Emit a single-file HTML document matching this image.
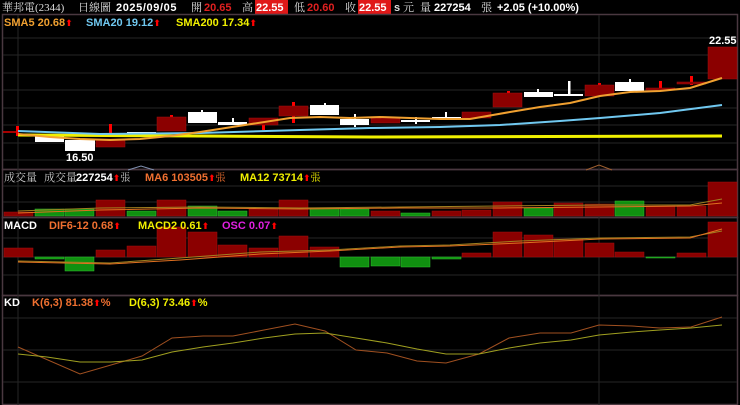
<!DOCTYPE html><html><head><meta charset="utf-8"><style>
html,body{margin:0;padding:0;background:#000;width:740px;height:405px;overflow:hidden}
svg{display:block}
text{font-family:"Liberation Sans","Noto Sans CJK TC",sans-serif;font-weight:bold;font-size:11px}
.c{font-family:"Liberation Serif","Noto Serif CJK SC",serif;font-weight:normal}
.a{fill:#f00;font-size:9px;font-family:"DejaVu Sans",sans-serif}
</style></head><body>
<svg width="740" height="405" viewBox="0 0 740 405" xmlns="http://www.w3.org/2000/svg">
<rect width="740" height="405" fill="#000"/>
<!-- header -->
<text x="2" y="11" fill="#ddd" class="c" font-size="11">華邦電(2344)</text>
<text x="78" y="11" fill="#ddd" class="c">日線圖</text>
<text x="116" y="11" fill="#fff" font-size="13" letter-spacing="0.6">2025/09/05</text>
<text x="191" y="11" fill="#ddd" class="c">開</text>
<text x="204" y="11" fill="#e02020" font-size="12">20.65</text>
<text x="242" y="11" fill="#ddd" class="c">高</text>
<rect x="255" y="0" width="33" height="14" fill="#e01818"/>
<text x="256" y="11" fill="#fff" font-size="12">22.55</text>
<text x="294" y="11" fill="#ddd" class="c">低</text>
<text x="307" y="11" fill="#e02020" font-size="12">20.60</text>
<text x="345" y="11" fill="#ddd" class="c">收</text>
<rect x="358" y="0" width="33" height="14" fill="#e01818"/>
<text x="359" y="11" fill="#fff" font-size="12">22.55</text>
<text x="394" y="11" fill="#ddd" font-size="10">s</text>
<text x="403" y="11" fill="#ddd" class="c">元</text>
<text x="420" y="11" fill="#ddd" class="c">量</text>
<text x="434" y="11" fill="#fff" font-size="12">227254</text>
<text x="481" y="11" fill="#ddd" class="c">張</text>
<text x="497" y="11" fill="#fff" font-size="12">+2.05 (+10.00%)</text>
<!-- panel borders -->
<g fill="none" stroke="#4a3840" stroke-width="1.5">
<rect x="2.5" y="14.5" width="735" height="155"/>
<rect x="2.5" y="169.5" width="735" height="48"/>
<rect x="2.5" y="217.5" width="735" height="78"/>
<rect x="2.5" y="295.5" width="735" height="109"/>
</g>
<g stroke="#262626" stroke-width="1">
<line x1="3" x2="737" y1="38" y2="38"/><line x1="3" x2="737" y1="55" y2="55"/><line x1="3" x2="737" y1="73" y2="73"/><line x1="3" x2="737" y1="90" y2="90"/><line x1="3" x2="737" y1="108" y2="108"/><line x1="3" x2="737" y1="125" y2="125"/><line x1="3" x2="737" y1="143" y2="143"/><line x1="3" x2="737" y1="160" y2="160"/>
<line x1="3" x2="737" y1="186" y2="186"/><line x1="3" x2="737" y1="202" y2="202"/>
<line x1="3" x2="737" y1="238" y2="238"/><line x1="3" x2="737" y1="257" y2="257"/><line x1="3" x2="737" y1="275" y2="275"/>
<line x1="3" x2="737" y1="318" y2="318"/><line x1="3" x2="737" y1="350" y2="350"/><line x1="3" x2="737" y1="382" y2="382"/>
<line x1="18" x2="18" y1="15" y2="405"/><line x1="599" x2="599" y1="15" y2="405"/>
</g>
<!-- legends -->
<text x="4" y="26" fill="#f0a030">SMA5 20.68<tspan class="a">⬆</tspan></text>
<text x="86" y="26" fill="#70c8f0">SMA20 19.12<tspan class="a">⬆</tspan></text>
<text x="176" y="26" fill="#f0f000">SMA200 17.34<tspan class="a">⬆</tspan></text>
<!-- candles -->
<g fill="#f00"><rect x="16" y="126" width="3" height="10"/><rect x="109" y="124" width="3" height="10"/><rect x="170" y="115" width="3" height="4"/><rect x="262" y="125" width="3" height="5"/><rect x="292" y="102" width="3" height="21"/><rect x="507" y="91" width="3" height="4"/><rect x="598" y="83" width="3" height="3"/><rect x="659" y="81" width="3" height="9"/><rect x="690" y="76" width="3" height="9"/></g>
<line x1="3" y1="132" x2="18" y2="132" stroke="#d00" stroke-width="1.5"/>
<g fill="#fff"><rect x="232" y="118" width="2" height="7"/><rect x="201" y="110" width="2" height="4"/><rect x="324" y="103" width="2" height="3"/><rect x="354" y="114" width="2" height="13"/><rect x="415" y="117" width="2" height="7"/><rect x="445" y="112" width="2" height="6"/><rect x="537" y="89" width="2" height="4"/><rect x="568" y="81" width="2.5" height="14"/><rect x="629" y="79" width="2" height="4"/></g>
<g fill="#fff">
<rect x="35" y="136" width="29" height="6"/><rect x="65" y="140" width="30" height="11"/><rect x="127" y="132" width="29" height="2"/><rect x="188" y="112" width="29" height="11"/><rect x="218" y="122" width="29" height="3"/><rect x="310" y="105" width="29" height="10"/><rect x="340" y="119" width="29" height="6"/><rect x="401" y="120" width="29" height="2"/><rect x="432" y="117" width="29" height="2"/><rect x="524" y="92" width="29" height="5"/><rect x="554" y="94" width="29" height="2"/><rect x="615" y="82" width="29" height="9"/></g>
<g fill="#8b0000" stroke="#a01010" stroke-width="0.5">
<rect x="96" y="139" width="29" height="8"/><rect x="157" y="117" width="29" height="14"/><rect x="249" y="118" width="29" height="7"/><rect x="279" y="106" width="29" height="10"/><rect x="371" y="118" width="29" height="5"/><rect x="462" y="112" width="29" height="6"/><rect x="493" y="93" width="29" height="14"/><rect x="585" y="85" width="29" height="11"/><rect x="646" y="88" width="29" height="2"/><rect x="677" y="82" width="29" height="2"/><rect x="708" y="47" width="29" height="32"/></g>
<text x="66" y="161" fill="#fff">16.50</text>
<text x="709" y="44" fill="#fff">22.55</text>
<polyline fill="none" stroke="#f0f000" stroke-width="3" points="18,135 200,136 370,137 722,136"/>
<polyline fill="none" stroke="#70c8f0" stroke-width="2" points="18,131 100,134 200,133 300,130 370,128 440,127 500,125 560,121 600,118 660,113 722,105"/>
<polyline fill="none" stroke="#f0a030" stroke-width="2" points="18,134 50,137 80,139 110,140 140,139 170,136 200,132 290,118 320,117 350,118 380,117 410,118 440,119 470,119 510,112 540,107 570,103 600,96 630,92 660,91 690,88 722,78"/>
<polyline fill="none" stroke="#8090b0" stroke-width="1" points="128,170 141,166 154,170"/>
<polyline fill="none" stroke="#a06030" stroke-width="1" points="586,170 599,165 612,170"/>
<!-- volume -->
<text x="4" y="181" fill="#ccc" class="c" font-size="10">成交量</text>
<text x="44" y="181" fill="#ccc" class="c" font-size="10">成交量</text>
<text x="76" y="181" fill="#fff">227254<tspan class="a">⬆</tspan><tspan fill="#ccc" class="c" font-size="10">張</tspan></text>
<text x="145" y="181" fill="#f07030">MA6 103505<tspan class="a">⬆</tspan><tspan fill="#f07030" class="c" font-size="10">張</tspan></text>
<text x="240" y="181" fill="#f0f000">MA12 73714<tspan class="a">⬆</tspan><tspan fill="#f0f000" class="c" font-size="10">張</tspan></text>
<g fill="#8b0000" stroke="#a01010" stroke-width="0.5">
<rect x="4" y="212" width="29" height="4"/><rect x="96" y="200" width="29" height="16"/><rect x="157" y="200" width="29" height="16"/><rect x="249" y="209" width="29" height="7"/><rect x="279" y="200" width="29" height="16"/><rect x="371" y="211" width="29" height="5"/><rect x="432" y="211" width="29" height="5"/><rect x="462" y="210" width="29" height="6"/><rect x="493" y="202" width="29" height="14"/><rect x="554" y="203" width="29" height="13"/><rect x="585" y="204" width="29" height="12"/><rect x="646" y="206" width="29" height="10"/><rect x="677" y="206" width="29" height="10"/><rect x="708" y="182" width="29" height="34"/></g>
<g fill="#109010" stroke="#30c030" stroke-width="0.5">
<rect x="35" y="209" width="29" height="7"/><rect x="65" y="209" width="29" height="7"/><rect x="127" y="211" width="29" height="5"/><rect x="188" y="206" width="29" height="10"/><rect x="218" y="211" width="29" height="5"/><rect x="310" y="208" width="29" height="8"/><rect x="340" y="209" width="29" height="7"/><rect x="401" y="213" width="29" height="3"/><rect x="524" y="208" width="29" height="8"/><rect x="615" y="201" width="29" height="15"/></g>
<polyline fill="none" stroke="#a08020" stroke-width="1" points="18,211 100,208 200,207 300,208 400,207 500,206 600,205 690,205 722,199"/>
<polyline fill="none" stroke="#e07020" stroke-width="1" points="18,213 100,210 200,208 300,209 400,208 500,208 600,207 690,206 722,203"/>
<!-- macd -->
<g fill="#8b0000" stroke="#a01010" stroke-width="0.5">
<rect x="4" y="248" width="29" height="9"/><rect x="96" y="250" width="29" height="7"/><rect x="127" y="246" width="29" height="11"/><rect x="157" y="227" width="29" height="30"/><rect x="188" y="232" width="29" height="25"/><rect x="218" y="245" width="29" height="12"/><rect x="249" y="248" width="29" height="9"/><rect x="279" y="236" width="29" height="21"/><rect x="310" y="247" width="29" height="10"/><rect x="462" y="253" width="29" height="4"/><rect x="493" y="232" width="29" height="25"/><rect x="524" y="235" width="29" height="22"/><rect x="554" y="239" width="29" height="18"/><rect x="585" y="243" width="29" height="14"/><rect x="615" y="252" width="29" height="5"/><rect x="677" y="253" width="29" height="4"/><rect x="708" y="222" width="29" height="35"/></g>
<g fill="#109010" stroke="#30c030" stroke-width="0.5">
<rect x="35" y="257" width="29" height="2"/><rect x="65" y="257" width="29" height="14"/><rect x="340" y="257" width="29" height="10"/><rect x="371" y="257" width="29" height="9"/><rect x="401" y="257" width="29" height="10"/><rect x="432" y="257" width="29" height="2"/><rect x="646" y="257" width="29" height="1"/></g>
<polyline fill="none" stroke="#a08020" stroke-width="1" points="18,261 110,263 180,258 260,252 330,250 400,246 450,245 520,241 600,238 690,237 722,231"/>
<polyline fill="none" stroke="#e07020" stroke-width="1" points="18,262 110,264 180,260 260,254 330,251 400,247 450,246 520,243 600,239 690,238 722,229"/>
<text x="4" y="229" fill="#fff">MACD</text>
<text x="49" y="229" fill="#f07030">DIF6-12 0.68<tspan class="a">⬆</tspan></text>
<text x="138" y="229" fill="#f0f000">MACD2 0.61<tspan class="a">⬆</tspan></text>
<text x="222" y="229" fill="#e020e0">OSC 0.07<tspan class="a">⬆</tspan></text>
<!-- KD -->
<text x="4" y="306" fill="#fff">KD</text>
<text x="32" y="306" fill="#f07030">K(6,3) 81.38<tspan class="a">⬆</tspan>%</text>
<text x="129" y="306" fill="#f0f000">D(6,3) 73.46<tspan class="a">⬆</tspan>%</text>
<polyline fill="none" stroke="#a05020" stroke-width="1" points="18,347 80,374 142,356 172,338 203,336 233,336 264,330 295,324 325,331 356,350 387,353 417,361 446,363 479,354 509,338 540,333 571,333 599,325 632,326 660,328 691,327 722,317"/>
<polyline fill="none" stroke="#a0a020" stroke-width="1" points="18,354 47,357 80,362 111,362 142,360 172,352 203,347 233,343 264,338 295,334 325,333 356,338 387,343 417,349 446,354 479,354 509,348 540,343 571,340 599,335 632,332 660,330 691,328 722,325"/>
</svg>
</body></html>
